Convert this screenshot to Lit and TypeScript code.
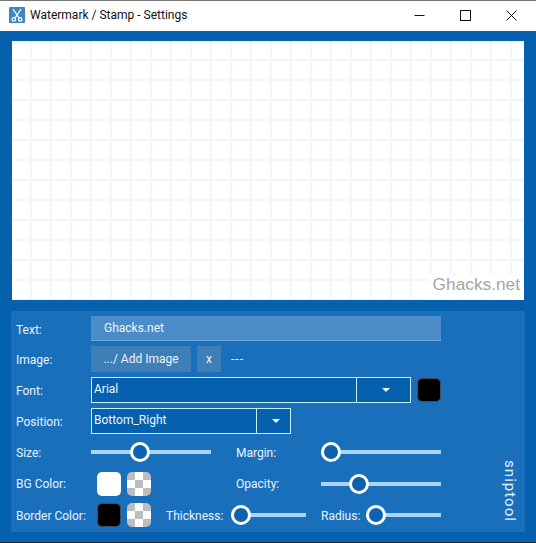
import { LitElement, html, css } from "lit";
import { customElement } from "lit/decorators.js";

@customElement("app-slider")
class AppSlider extends LitElement {
  static properties = { w: { type: Number }, at: { type: Number } };
  w = 120;
  at = 0;
  static styles = css`
    :host { display: block; }
    .track { position: relative; height: 4px; background: #a9d4f7; }
    .thumb {
      position: absolute; top: -8px; width: 20px; height: 20px; box-sizing: border-box;
      border: 3px solid #fff; border-radius: 50%; background: #0a62b0;
    }
  `;
  render() {
    return html`<div class="track" style="width:${this.w}px"><div class="thumb" style="left:${this.at - 10}px"></div></div>`;
  }
}

@customElement("app-root")
class AppRoot extends LitElement {
  static styles = css`
    :host {
      display: block; width: 536px; height: 543px; overflow: hidden;
      font-family: Roboto, "Noto Sans", sans-serif; font-size: 12px; color: #e8f3fc; white-space: nowrap;
    }
    .win { height: 543px; display: flex; flex-direction: column; box-sizing: border-box; background: #0560ae; border-top: 1px solid #777; border-bottom: 1px solid #1c2a3a; }
    .title { height: 30px; flex: none; background: #fff; display: flex; align-items: center; color: #111; font-size: 12px; padding: 0 0 2px 9px; box-sizing: border-box; }
    .appicon { width: 16px; height: 16px; background: #3f88bd; display: flex; margin-right: 5px; border-radius: 1px; }
    .title span { flex: 1; }
    .wbtn { width: 46px; height: 28px; display: flex; align-items: center; justify-content: center; }
    .wbtns { display: flex; padding-right: 2px; }
    .body { flex: 1; padding: 10px 12px 0 12px; display: flex; flex-direction: column; gap: 11px; min-height: 0; }
    .canvas {
      height: 259px; flex: none; background-color: #fff; box-sizing: border-box;
      background-image:
        linear-gradient(#f0f6f9 2px, transparent 2px),
        linear-gradient(90deg, #f0f6f9 2px, transparent 2px);
      background-size: 20px 20px; background-position: 18px 18px;
      display: flex; align-items: flex-end; justify-content: flex-end;
    }
    .mark { font-family: "Liberation Sans", Arial, sans-serif; font-size: 17.3px; color: #a5a5a5; background: #fff; line-height: 20px; padding: 0 4px 6px 4px; }
    .panel { height: 221px; flex: none; margin: 0 -1px; background: #1a6fbb; box-sizing: border-box; padding: 5px 0 0 5px; display: flex; }
    .rows { width: 430px; flex: none; display: flex; flex-direction: column; }
    .side { flex: 1; display: flex; justify-content: flex-end; padding: 144px 6px 0 0; }
    .side div { writing-mode: vertical-rl; font-size: 15px; letter-spacing: 0.07em; line-height: 18px; height: 60px; color: #e2f0fb; }
    .row { display: flex; align-items: center; flex: none; }
    .r1 { height: 25px; margin-bottom: 5px; }
    .r2 { height: 26px; margin-bottom: 5px; }
    .r3 { height: 26px; margin-bottom: 5px; }
    .r4 { height: 26px; margin-bottom: 6px; }
    .r5 { height: 23px; margin-bottom: 9px; }
    .r6 { height: 23px; margin-bottom: 8px; }
    .r7 { height: 23px; }
    .l { width: 75px; flex: none; padding-top: 2px; }
    .r6 .l, .r6 .lm { padding-top: 0; }
    .field { width: 350px; height: 25px; box-sizing: border-box; background: #4a8bc8; border-bottom: 1px solid #6ba6dc; padding-left: 13px; line-height: 24px; color: #eef6fd; }
    .btn { height: 26px; background: #3f7fb8; display: flex; align-items: center; justify-content: center; flex: none; color: #e8f3fc; }
    .add { width: 100px; }
    .x { width: 24px; margin-left: 6px; }
    .dash { margin-left: 10px; letter-spacing: 1px; }
    .sel { display: flex; height: 26px; box-sizing: border-box; border: 1px solid #c6f2fb; background: #0560ae; flex: none; }
    .sel .v { flex: 1; padding-left: 2px; line-height: 22px; color: #eef6fd; }
    .sel .a { width: 54px; flex: none; box-sizing: border-box; border-left: 1px solid #c6f2fb; padding-left: 4px; display: flex; align-items: center; justify-content: center; }
    .sel.small .a { width: 34px; }
    .tri { width: 0; height: 0; border-left: 4px solid transparent; border-right: 4px solid transparent; border-top: 4px solid #e8f8ff; }
    .font { width: 320px; }
    .pos { width: 200px; }
    .sw { width: 24px; height: 24px; border-radius: 5px; flex: none; box-sizing: border-box; }
    .black { background: #000; border: 1px solid #3a4e66; }
    .white { background: #fff; }
    .check {
      background-color: #fff;
      background-image: conic-gradient(#bdbdbd 25%, transparent 0 50%, #bdbdbd 0 75%, transparent 0);
      background-size: 16px 16px; background-position: 8px 0;
    }
    .gapl { margin-left: 6px; }
    .first { margin-left: 6px; }
    .lm { width: 85px; flex: none; padding-top: 2px; }
    .lt { width: 65px; flex: none; padding-top: 2px; }
    .lr { width: 45px; flex: none; padding-top: 2px; }
    .pair { display: flex; align-items: center; width: 75px; flex: none; }
  `;
  render() {
    return html`
      <div class="win">
        <div class="title">
          <div class="appicon">
            <svg width="16" height="16" viewBox="0 0 16 16" fill="none" stroke="#fff" stroke-width="1.3">
              <path d="M4 2l6 9M12 2L6 11"/><circle cx="4.8" cy="12.4" r="1.7"/><circle cx="11.2" cy="12.4" r="1.7"/>
            </svg>
          </div>
          <span>Watermark / Stamp - Settings</span>
          <div class="wbtns">
            <div class="wbtn"><svg width="11" height="11" viewBox="0 0 11 11"><path d="M0.5 5.5h10" stroke="#111" fill="none"/></svg></div>
            <div class="wbtn"><svg width="11" height="11" viewBox="0 0 11 11"><rect x=".5" y=".5" width="10" height="10" stroke="#111" fill="none"/></svg></div>
            <div class="wbtn"><svg width="11" height="11" viewBox="0 0 11 11"><path d="M.5 .5l10 10M10.5 .5l-10 10" stroke="#111" fill="none"/></svg></div>
          </div>
        </div>
        <div class="body">
          <div class="canvas"><div class="mark">Ghacks.net</div></div>
          <div class="panel">
            <div class="rows">
              <div class="row r1"><div class="l">Text:</div><div class="field">Ghacks.net</div></div>
              <div class="row r2"><div class="l">Image:</div><div class="btn add">.../ Add Image</div><div class="btn x">x</div><div class="dash">---</div></div>
              <div class="row r3"><div class="l">Font:</div><div class="sel font"><div class="v">Arial</div><div class="a"><div class="tri"></div></div></div><div class="sw black gapl"></div></div>
              <div class="row r4"><div class="l">Position:</div><div class="sel pos small"><div class="v">Bottom_Right</div><div class="a"><div class="tri"></div></div></div></div>
              <div class="row r5"><div class="l">Size:</div><app-slider .w=${120} .at=${49}></app-slider><div class="lm" style="margin-left:25px">Margin:</div><app-slider .w=${120} .at=${10}></app-slider></div>
              <div class="row r6"><div class="l">BG Color:</div><div class="pair"><div class="sw white first"></div><div class="sw check" style="margin-left:6px"></div></div><div style="width:70px;flex:none"></div><div class="lm">Opacity:</div><app-slider .w=${120} .at=${38}></app-slider></div>
              <div class="row r7"><div class="l">Border Color:</div><div class="pair"><div class="sw black first"></div><div class="sw check" style="margin-left:6px"></div></div><div class="lt">Thickness:</div><app-slider .w=${75} .at=${10}></app-slider><div class="lr" style="margin-left:15px">Radius:</div><app-slider .w=${75} .at=${10}></app-slider></div>
            </div>
            <div class="side"><div>sniptool</div></div>
          </div>
        </div>
      </div>`;
  }
}
